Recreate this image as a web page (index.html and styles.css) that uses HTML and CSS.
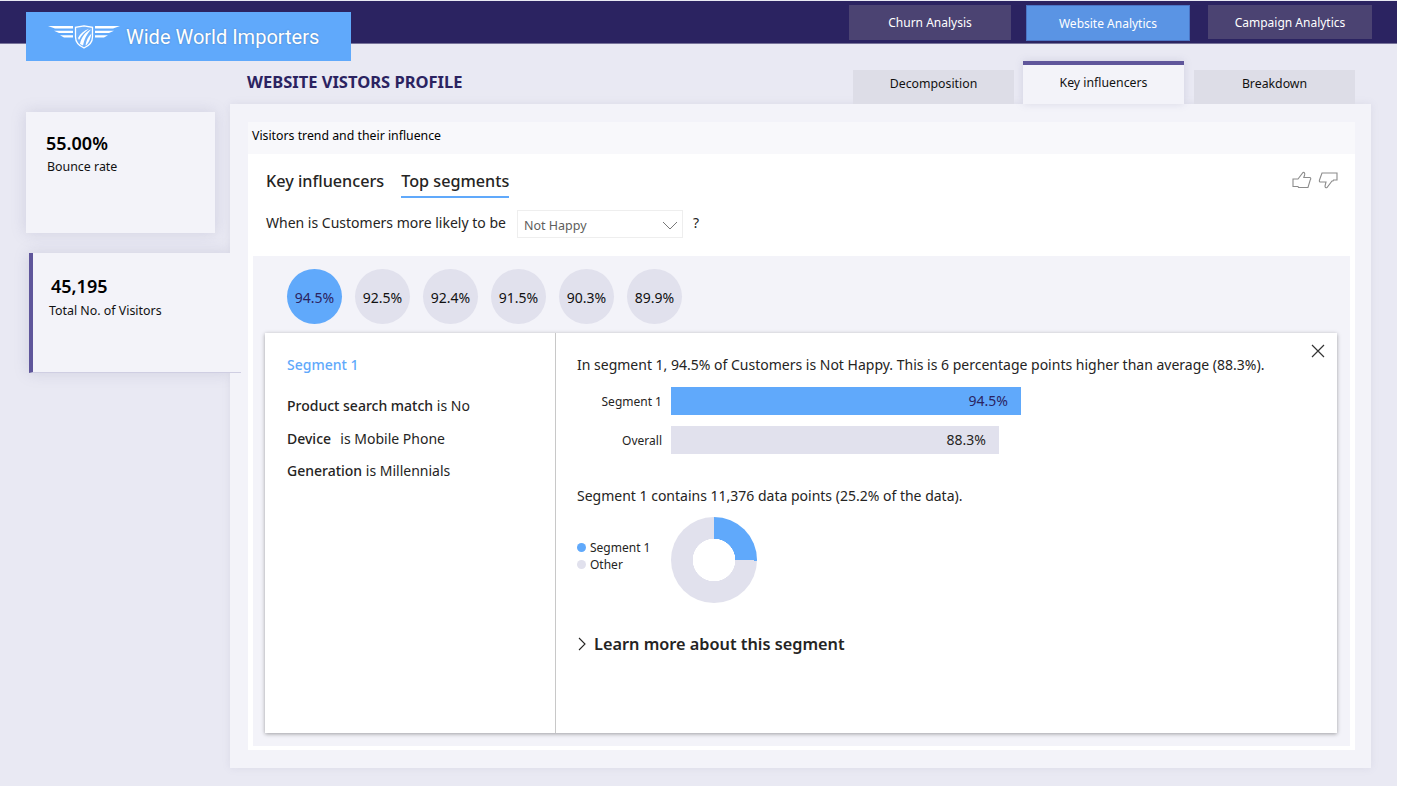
FILE: index.html
```html
<!DOCTYPE html>
<html lang="en">
<head>
  <meta charset="UTF-8">
  <title>Website Visitors Profile</title>
  <link rel="stylesheet" href="styles.css">
</head>
<body>
  <div class="page">
    <!-- Top band with logo and report links -->
    <header class="topbar">
      <div class="logo">
        <svg class="logo-mark" width="72" height="24" viewBox="0 0 72 24" fill="none">
          <path d="M0 1H25V3.6H7Z M6 5.8H25V8H11Z M12 10.2H25V12.4H16Z" fill="#fff"/>
          <path d="M72 1H47V3.6H65Z M66 5.8H47V8H61Z M60 10.2H47V12.4H56Z" fill="#fff"/>
          <path d="M36 0.8L44.5 2.4V12C44.5 17 41 20.8 36 23C31 20.8 27.5 17 27.5 12V2.4Z" fill="#6fb0fb" stroke="#fff" stroke-width="1.3"/>
          <path d="M32 19C33 13 37 7 43 4.5C39 9 36 14 35 20.5Z M30 13C32 9 36 5.5 41 3.8C37 7 33 10.5 31 15Z M37.5 20.5C38 16 40 11.5 43.5 8.5C42.5 12.5 41.5 16.5 39 19.5Z" fill="#fff"/>
        </svg>
        <span class="logo-text">Wide World Importers</span>
      </div>
      <nav class="report-nav">
        <a class="report-link link-churn">Churn Analysis</a>
        <a class="report-link link-active">Website Analytics</a>
        <a class="report-link link-campaign">Campaign Analytics</a>
      </nav>
    </header>

    <div class="main">
      <!-- KPI cards -->
      <aside class="side">
        <div class="kpi">
          <div class="kpi-value">55.00%</div>
          <div class="kpi-label">Bounce rate</div>
        </div>
        <div class="kpi kpi-selected">
          <div class="kpi-value">45,195</div>
          <div class="kpi-label">Total No. of Visitors</div>
        </div>
      </aside>

      <section class="content">
        <div class="title-row">
          <h1 class="page-title">WEBSITE VISTORS PROFILE</h1>
          <div class="tabs">
            <a class="tab">Decomposition</a>
            <a class="tab tab-active">Key influencers</a>
            <a class="tab">Breakdown</a>
          </div>
        </div>

        <div class="panel">
          <div class="visual-title">Visitors trend and their influence</div>
          <div class="visual">
            <div class="visual-head">
              <div class="visual-tabs">
                <span class="visual-tab">Key influencers</span>
                <span class="visual-tab visual-tab-on">Top segments</span>
              </div>
              <div class="thumbs">
                <svg width="20" height="18" viewBox="0 0 20 18" fill="none" stroke="#8c8c8c" stroke-width="1.1">
                  <path d="M1 8H6L11 1.5C12.5 1 13 2.5 12.6 4L11.8 6.5H18C19 7 19 8 18.2 9L16 16.5H6.5L6 15.5H1Z"/>
                </svg>
                <svg width="20" height="18" viewBox="0 0 20 18" fill="none" stroke="#8c8c8c" stroke-width="1.1">
                  <path d="M19 2H4L1.5 9C1 10.5 1.5 11 3 11H8L7 15C7 16.5 8 17 9 16.5L14 10H15L15.5 9H19Z"/>
                </svg>
              </div>
            </div>

            <div class="question">
              <span>When is Customers more likely to be</span>
              <div class="select">
                <span>Not Happy</span>
                <svg width="16" height="9" viewBox="0 0 16 9" fill="none" stroke="#777" stroke-width="1">
                  <path d="M1 1L8 8L15 1"/>
                </svg>
              </div>
              <span class="question-mark">?</span>
            </div>

            <div class="segments">
              <div class="bubbles">
                <div class="bubble bubble-on">94.5%</div>
                <div class="bubble">92.5%</div>
                <div class="bubble">92.4%</div>
                <div class="bubble">91.5%</div>
                <div class="bubble">90.3%</div>
                <div class="bubble">89.9%</div>
              </div>

              <div class="detail">
                <div class="detail-left">
                  <div class="segment-name">Segment 1</div>
                  <p class="rule"><b>Product search match</b> is No</p>
                  <p class="rule"><b class="rule-device">Device</b>&nbsp; is Mobile Phone</p>
                  <p class="rule"><b>Generation</b> is Millennials</p>
                </div>
                <div class="detail-right">
                  <svg class="close" width="14" height="14" viewBox="0 0 14 14" stroke="#333" stroke-width="1.2">
                    <path d="M1 1L13 13M13 1L1 13"/>
                  </svg>
                  <p class="summary">In segment 1, 94.5% of Customers is Not Happy. This is 6 percentage points higher than average (88.3%).</p>
                  <div class="bar-row">
                    <span class="bar-label">Segment 1</span>
                    <div class="bar bar-segment" style="width: 350px">94.5%</div>
                  </div>
                  <div class="bar-row">
                    <span class="bar-label">Overall</span>
                    <div class="bar bar-overall" style="width: 328px">88.3%</div>
                  </div>
                  <p class="summary summary-points">Segment 1 contains 11,376 data points (25.2% of the data).</p>
                  <div class="donut-row">
                    <div class="legend">
                      <div class="legend-item"><i class="dot dot-segment"></i>Segment 1</div>
                      <div class="legend-item"><i class="dot dot-other"></i>Other</div>
                    </div>
                    <div class="donut"></div>
                  </div>
                  <div class="learn">
                    <svg width="10" height="14" viewBox="0 0 10 14" fill="none" stroke="#252423" stroke-width="1.1">
                      <path d="M2 1L8 7L2 13"/>
                    </svg>
                    <span>Learn more about this segment</span>
                  </div>
                </div>
              </div>
            </div>
          </div>
        </div>
      </section>
    </div>
  </div>
</body>
</html>
```

FILE: styles.css
```css
* {
  box-sizing: border-box;
}
html, body {
  height: 100%;
}
body {
  margin: 0;
  background-color: #fff;
  font-family: "Noto Sans", Arial, sans-serif;
  color: #252423;
  overflow: hidden;
}
.page {
  width: 1397px;
  height: 786px;
  background-color: #e9e9f3;
  padding-top: 1px;
}

/* top band */
.topbar {
  height: 43px;
  background-color: #2b2361;
  border-bottom: 1px solid #77739a;
  position: relative;
  display: flex;
  justify-content: flex-end;
}
.logo {
  position: absolute;
  left: 26px;
  top: 11px;
  width: 325px;
  height: 49px;
  background-color: #60a9fb;
  display: flex;
  align-items: center;
  padding-left: 22px;
  gap: 6px;
}
.logo-text {
  font-family: Roboto, Arial, sans-serif;
  font-size: 20px;
  color: #fff;
  text-shadow: 0 0 2px rgba(0, 0, 0, 0.25);
}
.report-nav {
  display: flex;
  padding-top: 4px;
  padding-right: 25px;
}
.report-link {
  width: 161px;
  height: 35px;
  background-color: #4b4372;
  color: #fff;
  font-size: 12px;
  display: flex;
  align-items: center;
  justify-content: center;
  margin-left: 18px;
}
.link-churn {
  width: 162px;
  margin-right: -3px;
}
.link-active {
  width: 164px;
  height: 36px;
  background-color: #5a94e4;
  border: 1px solid #4a74c4;
}
.link-campaign {
  width: 164px;
  height: 34px;
}

/* main area */
.main {
  display: flex;
  padding-left: 26px;
}
.side {
  width: 204px;
  padding-top: 68px;
  position: relative;
}
.kpi {
  width: 189px;
  height: 121px;
  background-color: #f3f3f9;
  padding: 19px 20px;
  box-shadow: 0 0 14px rgba(120, 120, 160, 0.22);
}
.kpi-selected {
  width: 212px;
  height: 120px;
  margin-top: 20px;
  margin-left: 3px;
  border-left: 4px solid #5f569b;
  border-bottom: 1px solid #cfcee2;
  padding: 21px 16px;
  position: relative;
  z-index: 1;
  box-shadow: none;
}
/* the card sits over the panel, its shadow stops at the panel edge */
.kpi-selected::before {
  content: "";
  position: absolute;
  left: -4px;
  top: 0;
  bottom: -1px;
  width: 201px;
  box-shadow: 0 0 14px rgba(120, 120, 160, 0.22);
  clip-path: inset(-20px 0 -20px -20px);
  z-index: -1;
}
.kpi-value {
  font-size: 18px;
  font-weight: 600;
  color: #000;
  line-height: 24px;
}
.kpi-selected .kpi-value {
  padding-left: 2px;
}
.kpi-label {
  font-size: 12.4px;
  color: #111;
  line-height: 20px;
  padding-top: 2px;
  padding-left: 1px;
}
.kpi-selected .kpi-label {
  padding-top: 3px;
  padding-left: 0;
}

.content {
  width: 1141px;
}
.title-row {
  height: 60px;
  display: flex;
  justify-content: space-between;
  padding-left: 17px;
  padding-right: 16px;
}
.page-title {
  margin: 26px 0 0;
  font-size: 16.5px;
  line-height: 24px;
  font-weight: 700;
  color: #2b2361;
}
.tabs {
  display: flex;
  align-items: flex-end;
  gap: 9px;
}
.tab {
  width: 161px;
  height: 34px;
  background-color: #dddde7;
  color: #111;
  font-size: 12.3px;
  display: flex;
  align-items: center;
  justify-content: center;
  padding-bottom: 8px;
}
.tab-active {
  height: 43px;
  margin-right: 1px;
  background-color: #f3f3f9;
  border-top: 4px solid #5f569b;
  padding-bottom: 4px;
  box-shadow: 0 0 8px rgba(120, 120, 160, 0.2);
}

.panel {
  height: 664px;
  background-color: #f3f3f9;
  padding: 18px 16px 0 18px;
  box-shadow: 0 0 8px rgba(120, 120, 160, 0.12);
}
.visual-title {
  height: 32px;
  background-color: #f8f8fb;
  color: #000;
  font-size: 12.3px;
  line-height: 27px;
  padding-left: 4px;
}
.visual {
  height: 596px;
  background-color: #fff;
  padding: 0 5px;
}
.visual-head {
  height: 56px;
  display: flex;
  justify-content: space-between;
  padding: 16px 0 0 13px;
}
.visual-tabs {
  display: flex;
  gap: 17px;
}
.visual-tab {
  font-size: 16.2px;
  font-weight: 500;
  line-height: 22px;
  height: 28px;
  color: #252423;
}
.visual-tab-on {
  border-bottom: 2px solid #60a9fb;
}
.thumbs {
  display: flex;
  gap: 6px;
  padding-right: 12px;
  padding-top: 1px;
  height: 20px;
}
.question {
  height: 46px;
  display: flex;
  align-items: flex-start;
  padding-left: 13px;
  font-size: 14px;
  line-height: 26px;
}
.select {
  width: 166px;
  height: 28px;
  margin-left: 11px;
  border: 1px solid #eee;
  display: flex;
  justify-content: space-between;
  align-items: center;
  padding: 3px 4px 0 6px;
  font-size: 12.5px;
  color: #605e5c;
}
.question-mark {
  margin-left: 10px;
}

.segments {
  height: 490px;
  background-color: #f3f3f9;
  padding: 13px 13px 0 12px;
}
.bubbles {
  display: flex;
  gap: 13px;
  padding-left: 22px;
}
.bubble {
  width: 55px;
  height: 55px;
  border-radius: 50%;
  background-color: #e1e1ed;
  color: #111;
  font-size: 14px;
  line-height: 57px;
  text-align: center;
}
.bubble-on {
  background-color: #60a9fb;
  color: #2b2361;
}
.detail {
  display: flex;
  height: 400px;
  margin-top: 9px;
  background-color: #fff;
  box-shadow: 0 1px 4px rgba(0, 0, 0, 0.35);
}
.detail-left {
  width: 291px;
  border-right: 1px solid #c8c8c8;
  padding: 22px 22px;
}
.segment-name {
  font-size: 14px;
  font-weight: 500;
  line-height: 20px;
  color: #60a9fb;
  margin-bottom: 21px;
}
.rule {
  margin: 0 0 12.5px;
  font-size: 14px;
  line-height: 20px;
}
.rule b {
  font-weight: 500;
}
.rule .rule-device {
  margin-right: 2px;
}
.detail-right {
  flex: 1;
  position: relative;
  padding: 22px 21px;
}
.close {
  position: absolute;
  top: 11px;
  right: 12px;
}
.summary {
  margin: 0;
  font-size: 14px;
  line-height: 20px;
}
.bar-row {
  display: flex;
  align-items: center;
  height: 28px;
  margin-top: 11px;
}
.bar-row:first-of-type {
  margin-top: 12px;
}
.bar-label {
  width: 94px;
  padding-right: 9px;
  text-align: right;
  font-size: 12px;
}
.bar {
  height: 28px;
  font-size: 14px;
  text-align: right;
  line-height: 28px;
  padding-right: 13px;
}
.bar-segment {
  background-color: #60a9fb;
  color: #2b2361;
}
.bar-overall {
  background-color: #e1e1ed;
}
.summary-points {
  margin-top: 32px;
}
.donut-row {
  display: flex;
  align-items: center;
  margin-top: 11px;
}
.legend {
  width: 94px;
  font-size: 12px;
  line-height: 17px;
  padding-bottom: 8px;
}
.legend-item {
  display: flex;
  align-items: center;
  gap: 4px;
}
.dot {
  width: 9px;
  height: 9px;
  border-radius: 50%;
}
.dot-segment {
  background-color: #60a9fb;
}
.dot-other {
  background-color: #e1e1ed;
}
.donut {
  width: 86px;
  height: 86px;
  border-radius: 50%;
  background: radial-gradient(circle, #fff 21px, transparent 21.5px), conic-gradient(#60a9fb 0 25.2%, #e1e1ed 25.2% 100%);
}
.learn {
  display: flex;
  align-items: center;
  gap: 7px;
  margin-top: 30px;
  font-size: 16.3px;
  font-weight: 600;
  line-height: 22px;
}
```
